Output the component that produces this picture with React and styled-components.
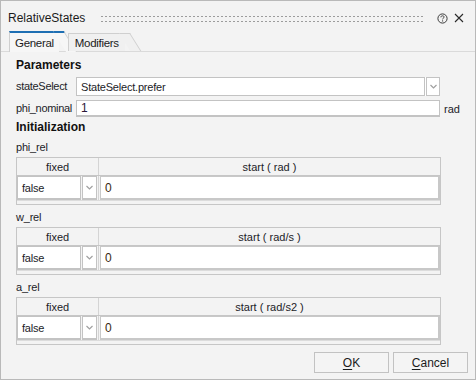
import React from 'react';
import styled, { createGlobalStyle } from 'styled-components';

const GlobalStyle = createGlobalStyle`
    html, body {
        margin: 0;
        padding: 0;
        background: #f3f3f3;
    }
    body {
        font-family: "Liberation Sans", Arial, sans-serif;
        font-size: 11px;
        color: #1c1c28;
    }
    * {
        box-sizing: border-box;
    }
`

const Window = styled.div`
    width: 476px;
    height: 380px;
    border: 1px solid #b9b9b9;
    background: #f3f3f3;
    display: flex;
    flex-direction: column;
`

const TitleBar = styled.div`
    display: flex;
    align-items: center;
    height: 22px;
    margin-top: 6px;
    padding: 0 9px 0 7px;
`

const Title = styled.span`
    font-size: 12px;
    color: #1b1b1b;
`

const Grip = styled.div`
    flex: 1;
    height: 9px;
    margin: 0 10px 0 15px;
    background-image: radial-gradient(circle, #9c9c9c 0.75px, transparent 1.05px);
    background-size: 4px 5px;
    background-position: 0 0;
`

const TitleButton = styled.span`
    display: flex;
    align-items: center;
    justify-content: center;
    width: 14px;
    height: 14px;
    margin-left: ${p => p.gap || 0}px;
`

const TabStrip = styled.div`
    display: flex;
    align-items: flex-end;
    height: 21px;
    margin-top: 2px;
    padding-left: 8px;
    border-bottom: 1px solid #dadada;
`

const Tab = styled.div`
    position: relative;
    height: ${p => (p.active ? 21 : 18)}px;
    margin-bottom: ${p => (p.active ? -1 : 0)}px;
    margin-right: ${p => (p.active ? 9 : 0)}px;
    padding: ${p => (p.active ? '4px 5px 0 5px' : '3px 6px 0 6px')};
    background: ${p => (p.active ? '#f6f6f6' : '#f0f0f0')};
    border-left: 1px solid #cfcfcf;
    border-top: ${p => (p.active ? '2px solid #1e6fb3' : '1px solid #cfcfcf')};
    font-size: 11.5px;
    letter-spacing: -0.3px;
    color: #1b1b1b;
    white-space: nowrap;
    span {
        position: relative;
        z-index: 1;
    }
    &::after {
        content: '';
        position: absolute;
        top: ${p => (p.active ? -2 : -1)}px;
        right: -5px;
        width: 10px;
        height: 100%;
        background: inherit;
        border-top: inherit;
        border-right: 1px solid #cfcfcf;
        transform: skewX(32deg);
        transform-origin: top left;
    }
`

const Body = styled.div`
    display: flex;
    flex-direction: column;
    padding: 6px 35px 0 15px;
`

const SectionTitle = styled.div`
    font-weight: bold;
    font-size: 12px;
    line-height: 15px;
    margin-top: ${p => p.mt || 0}px;
    color: #111;
`

const FormRow = styled.div`
    display: grid;
    grid-template-columns: 60px 1fr 32px;
    align-items: center;
    margin-top: ${p => p.mt || 0}px;
    margin-right: -32px;
`

const Label = styled.span`
    line-height: 15px;
    letter-spacing: -0.3px;
`

const Combo = styled.div`
    display: flex;
    height: ${p => p.h || 19}px;
    background: #fff;
`

const ComboValue = styled.div`
    flex: 1;
    display: flex;
    align-items: center;
    padding-left: 4px;
    border: 1px solid #c3c3c3;
    border-width: ${p => (p.thick ? '1px 1px 2px 1px' : '1px')};
    background: #fff;
    white-space: nowrap;
    letter-spacing: -0.2px;
`

const ComboButton = styled.div`
    display: flex;
    align-items: center;
    justify-content: center;
    width: ${p => p.w || 15}px;
    border: 1px solid #c3c3c3;
    border-width: ${p => (p.thick ? '1px 1px 2px 1px' : '1px')};
    background: #fff;
    margin-left: 1px;
`

const TextInput = styled.div`
    display: flex;
    align-items: center;
    height: 17px;
    padding-left: 4px;
    border: 1px solid #c3c3c3;
    border-bottom: 2px solid #c3c3c3;
    background: #fff;
    font-size: 12px;
    color: #2c1838;
`

const Unit = styled.span`
    padding-left: 4px;
`

const VarLabel = styled.div`
    line-height: 15px;
    margin-top: 5px;
    letter-spacing: -0.2px;
`

const Table = styled.div`
    margin-top: 2px;
    width: 425px;
    border: 1px solid #c6c6c6;
    background: #f3f3f3;
`

const HeaderRow = styled.div`
    display: grid;
    grid-template-columns: 82px 1fr;
    height: 18px;
    border-bottom: 1px solid #c6c6c6;
`

const HeaderCell = styled.div`
    display: flex;
    align-items: center;
    justify-content: center;
    border-right: ${p => (p.divider ? '1px solid #d4d4d4' : 'none')};
`

const DataRow = styled.div`
    display: grid;
    grid-template-columns: 82px 1fr;
    height: 24px;
`

const FixedCell = styled.div`
    display: flex;
    padding-right: 1px;
    border-right: 1px solid #d4d4d4;
`

const StartCell = styled.div`
    display: flex;
    align-items: center;
    padding-left: 4px;
    margin-left: 1px;
    border: 2px solid #c8c8c8;
    border-top-width: 1px;
    border-left-width: 1px;
    background: #fff;
    font-size: 12px;
    color: #3a2a10;
`

const ScrollStrip = styled.div`
    height: 4px;
    border-top: 1px solid #dcdcdc;
`

const Footer = styled.div`
    margin-top: auto;
    display: flex;
    justify-content: flex-end;
    gap: 4px;
    padding: 0 7px 6px 0;
`

const Button = styled.button`
    width: 75px;
    height: 21px;
    border: 1px solid #c2c2c2;
    background: #f4f4f4;
    font-family: inherit;
    font-size: 12px;
    color: #1b1b1b;
    padding: 0;
    u {
        text-decoration: underline;
        text-underline-offset: 2px;
    }
`

const Chevron = () => (
    <svg width="7" height="5" viewBox="0 0 7 5">
        <path d="M0.5 1 L3.5 4 L6.5 1" fill="none" stroke="#a0a0a0" strokeWidth="1.2" />
    </svg>
)

const HelpIcon = () => (
    <svg width="11" height="11" viewBox="0 0 11 11">
        <circle cx="5.5" cy="5.5" r="4.6" fill="none" stroke="#3a3a3a" strokeWidth="1" />
        <path d="M3.9 4.3 C3.9 3.2 4.7 2.8 5.5 2.8 C6.4 2.8 7.1 3.3 7.1 4.1 C7.1 5 5.6 5.2 5.6 6.3" fill="none" stroke="#3a3a3a" strokeWidth="1" />
        <circle cx="5.6" cy="7.9" r="0.6" fill="#3a3a3a" />
    </svg>
)

const CloseIcon = () => (
    <svg width="10" height="10" viewBox="0 0 10 10">
        <path d="M1 1 L9 9 M9 1 L1 9" stroke="#2a2a2a" strokeWidth="1.1" />
    </svg>
)

const StateTable = ({ label, unit }) => (
    <>
        <VarLabel>{label}</VarLabel>
        <Table>
            <HeaderRow>
                <HeaderCell divider>fixed</HeaderCell>
                <HeaderCell>start ( {unit} )</HeaderCell>
            </HeaderRow>
            <DataRow>
                <FixedCell>
                    <ComboValue thick>false</ComboValue>
                    <ComboButton thick w={15}>
                        <Chevron />
                    </ComboButton>
                </FixedCell>
                <StartCell>0</StartCell>
            </DataRow>
            <ScrollStrip />
        </Table>
    </>
)

const states = [
    { label: 'phi_rel', unit: 'rad' },
    { label: 'w_rel', unit: 'rad/s' },
    { label: 'a_rel', unit: 'rad/s2' },
]

const App = () => {
    return (
        <Window>
            <GlobalStyle />
            <TitleBar>
                <Title>RelativeStates</Title>
                <Grip />
                <TitleButton><HelpIcon /></TitleButton>
                <TitleButton gap={3}><CloseIcon /></TitleButton>
            </TitleBar>
            <TabStrip>
                <Tab active><span>General</span></Tab>
                <Tab><span>Modifiers</span></Tab>
            </TabStrip>
            <Body>
                <SectionTitle>Parameters</SectionTitle>
                <FormRow mt={4}>
                    <Label>stateSelect</Label>
                    <Combo>
                        <ComboValue>StateSelect.prefer</ComboValue>
                        <ComboButton w={14}>
                            <Chevron />
                        </ComboButton>
                    </Combo>
                    <span />
                </FormRow>
                <FormRow mt={4}>
                    <Label>phi_nominal</Label>
                    <TextInput>1</TextInput>
                    <Unit>rad</Unit>
                </FormRow>
                <SectionTitle mt={3}>Initialization</SectionTitle>
                {states.map(s => (
                    <StateTable key={s.label} label={s.label} unit={s.unit} />
                ))}
            </Body>
            <Footer>
                <Button><u>O</u>K</Button>
                <Button><u>C</u>ancel</Button>
            </Footer>
        </Window>
    )
}

export default App;
